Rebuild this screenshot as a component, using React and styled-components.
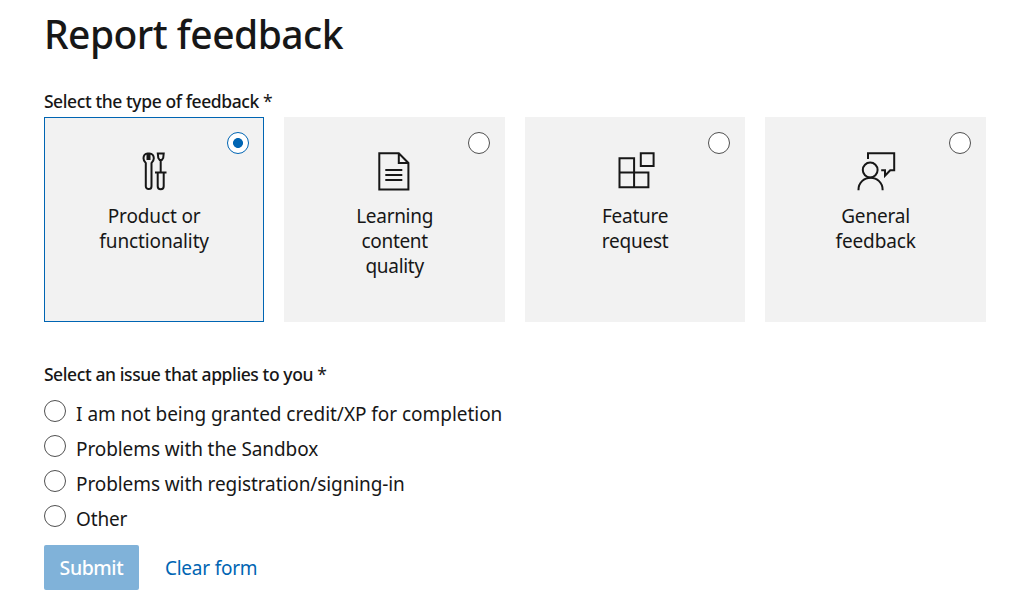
import React, { useState } from 'react'
import styled, { createGlobalStyle } from 'styled-components'

const GlobalStyle = createGlobalStyle`
    * {
        box-sizing: border-box;
    }

    body {
        margin: 0;
        background-color: #fff;
        color: #171717;
        font-family: "Segoe UI", "Noto Sans", "Open Sans", sans-serif;
    }
`;

const Form = styled.form`
    width: 1026px;
    padding: 9px 40.1px 21px 43.9px;
`;

const Title = styled.h1`
    margin: 0;
    font-size: 39px;
    line-height: 50px;
    font-weight: 500;
    letter-spacing: -0.52px;
`;

const Group = styled.fieldset`
    margin: 0;
    padding: 0;
    border: 0;
    min-width: 0;
`;

const Legend = styled.legend`
    display: block;
    padding: ${props => props.$top}px 0 0;
    font-size: 17.5px;
    line-height: 24px;
    font-weight: 500;
    letter-spacing: -0.4px;
    white-space: nowrap;
`;

const Required = styled.span`
    font-weight: 400;
`;

const Cards = styled.div`
    display: grid;
    grid-template-columns: repeat(4, 1fr);
    gap: 20px;
    margin-top: 4px;
`;

const Card = styled.label`
    position: relative;
    display: flex;
    flex-direction: column;
    align-items: center;
    height: 205px;
    padding-top: 32px;
    border: 1px solid ${props => props.$active ? '#0065b3' : '#f2f2f2'};
    background-color: #f2f2f2;
    cursor: pointer;
`;

const CardIcon = styled.svg`
    width: 42px;
    height: 42px;
    fill: none;
    stroke: #171717;
    stroke-width: 2;
`;

const CardName = styled.span`
    width: 120px;
    margin-top: 12px;
    font-size: 19px;
    line-height: 25px;
    letter-spacing: ${props => props.$spacing}px;
    text-align: center;
`;

const Radio = styled.input.attrs({ type: 'radio' })`
    appearance: none;
    flex: none;
    width: 22px;
    height: 22px;
    margin: 0;
    border: 1.5px solid #505050;
    border-radius: 50%;
    background-color: #fff;
    cursor: pointer;

    &:checked {
        border-color: #0065b3;
        background-image: radial-gradient(circle, #0065b3 4.6px, transparent 5.3px);
    }
`;

const CardRadio = styled(Radio)`
    position: absolute;
    top: 14px;
    right: 14px;
`;

const Issues = styled.div`
    display: flex;
    flex-direction: column;
    align-items: flex-start;
    margin-top: 10px;
`;

const Issue = styled.label`
    display: flex;
    align-items: flex-start;
    height: 35px;
    padding-top: 4px;
    cursor: pointer;
`;

const IssueName = styled.span`
    margin: 2px 0 0 10.2px;
    font-size: 19px;
    line-height: 25px;
    letter-spacing: ${props => props.$spacing}px;
    white-space: nowrap;
`;

const Actions = styled.div`
    display: flex;
    align-items: center;
    margin-top: 9px;
`;

const Button = styled.button`
    width: 95px;
    height: 45px;
    padding: 0;
    border: 0;
    border-radius: 2px;
    background-color: #80b2d9;
    color: #fff;
    font-family: inherit;
    font-size: 19.5px;
    font-weight: 500;
    letter-spacing: -0.45px;
`;

const ClearButton = styled(Button)`
    width: auto;
    margin-left: 26px;
    background-color: transparent;
    color: #0065b3;
    font-size: 19px;
    font-weight: 400;
    letter-spacing: -0.22px;
    cursor: pointer;
`;

const ToolsIcon = () => (
    <CardIcon viewBox="0 0 42 42">
        <path d="M14.500 9V3.400C12.100 3.400 10.500 5.800 10.500 8.300c0 2.400 1.200 3.900 2.300 4.800V36.200a2.850 2.850 0 0 0 5.700 0V13.100c1.100-.9 2.300-2.400 2.300-4.800 0-2.500-1.600-4.900-4.300-4.900V9z" />
        <path d="M24.800 3.500h5.900l-.5 4.500-1.400 2h-2.100l-1.400-2zM27.700 10v12.500M22 22.500h11.500M24.700 22.500v13.700a3 3 0 0 0 6 0v-13.700" />
    </CardIcon>
)

const DocumentIcon = () => (
    <CardIcon viewBox="0 0 42 42">
        <path d="M5.300 3.300h19.500l9.600 9.700v26.500H5.300zM24.800 3.300v9.700h9.600M11.300 20h17M11.300 25h17M11.300 30h17" />
    </CardIcon>
)

const BlocksIcon = () => (
    <CardIcon viewBox="0 0 42 42">
        <path d="M5.500 8.300h14.600v29H5.500zM5.500 22.500h28.900v14.800H20.100M26.800 3.300h12.800v12.700H26.800z" />
    </CardIcon>
)

const PersonIcon = () => (
    <CardIcon viewBox="0 0 42 42">
        <circle cx="15.200" cy="20" r="7.400" />
        <path d="M3.500 40.300v-.8a12.050 11.800 0 0 1 24.100 0v.8M13 9V3.300h26.200v17h-4l-5.200 5.500v-5.500h-3.800" />
    </CardIcon>
)

const types = [
    { name: 'Product or functionality', icon: ToolsIcon, spacing: -0.12 },
    { name: 'Learning content quality', icon: DocumentIcon, spacing: -0.3 },
    { name: 'Feature request', icon: BlocksIcon, spacing: -0.25 },
    { name: 'General feedback', icon: PersonIcon, spacing: -0.15 },
]

const issues = [
    { name: 'I am not being granted credit/XP for completion', spacing: -0.04 },
    { name: 'Problems with the Sandbox', spacing: -0.1 },
    { name: 'Problems with registration/signing-in', spacing: -0.1 },
    { name: 'Other', spacing: -0.2 },
]

const App = () => {
    const [type, setType] = useState(types[0].name)
    const [issue, setIssue] = useState('')

    const clear = () => {
        setType('')
        setIssue('')
    }

    return (
        <>
            <GlobalStyle />
            <Form onSubmit={e => e.preventDefault()}>
                <Title>Report feedback</Title>
                <Group>
                    <Legend $top={30}>Select the type of feedback <Required>*</Required></Legend>
                    <Cards>
                        {types.map(({ name, icon: Icon, spacing }) => (
                            <Card key={name} $active={type === name}>
                                <CardRadio name="type" checked={type === name} onChange={() => setType(name)} />
                                <Icon />
                                <CardName $spacing={spacing}>{name}</CardName>
                            </Card>
                        ))}
                    </Cards>
                </Group>
                <Group>
                    <Legend $top={40}>Select an issue that applies to you <Required>*</Required></Legend>
                    <Issues>
                        {issues.map(({ name, spacing }) => (
                            <Issue key={name}>
                                <Radio name="issue" checked={issue === name} onChange={() => setIssue(name)} />
                                <IssueName $spacing={spacing}>{name}</IssueName>
                            </Issue>
                        ))}
                    </Issues>
                </Group>
                <Actions>
                    <Button type="submit" disabled={!issue}>Submit</Button>
                    <ClearButton type="button" onClick={clear}>Clear form</ClearButton>
                </Actions>
            </Form>
        </>
    )
}

export default App
